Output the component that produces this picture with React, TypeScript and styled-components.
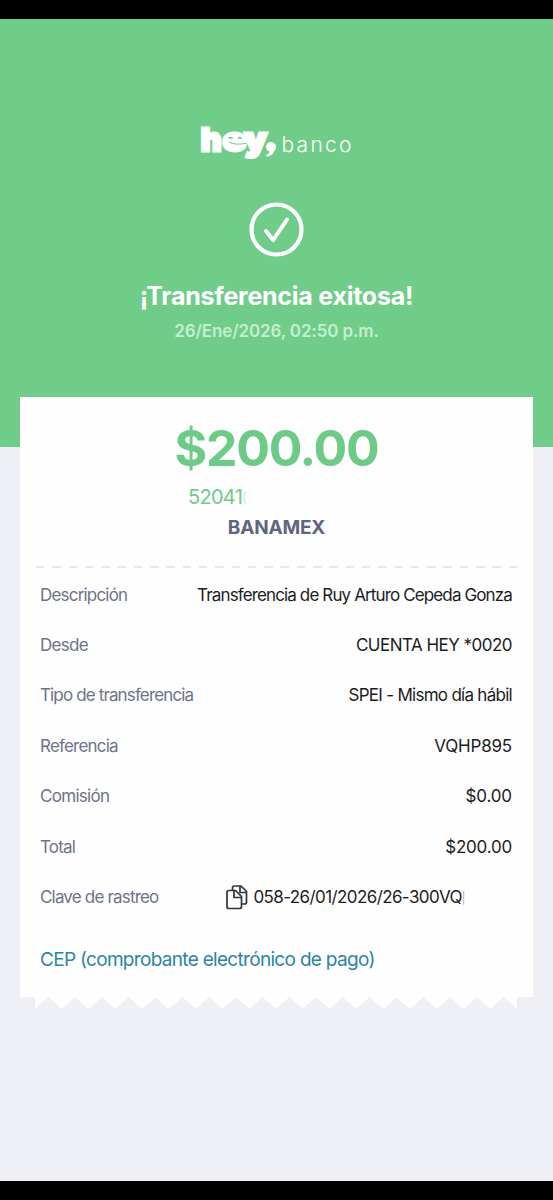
import React from "react";
import styled, { createGlobalStyle } from "styled-components";

const GlobalStyle = createGlobalStyle`
  * { box-sizing: border-box; }
  body { margin: 0; background: #000; font-family: Inter, "Liberation Sans", sans-serif; }
`;

const Screen = styled.div`
  height: 1200px;
  width: 553px;
  padding: 19px 0;
  background: #000;
  overflow: hidden;
`;

const Page = styled.main`
  height: 1162px;
  background: linear-gradient(#70cc89 0 428px, #eff0f6 428px);
  display: flex;
  flex-direction: column;
  align-items: center;
`;

const Header = styled.header`
  height: 378px;
  padding-top: 101px;
  display: flex;
  flex-direction: column;
  align-items: center;
  color: #fff;
`;

const Logo = styled.svg`
  display: block;
  width: 160px;
  height: 46px;
  overflow: visible;
`;

const CheckIcon = styled.svg`
  display: block;
  width: 57px;
  height: 57px;
  margin-top: 35px;
`;

const Line = styled.div<{ $size: number; $track?: number; $weight?: number }>`
  font-size: ${(p) => p.$size}px;
  font-weight: ${(p) => p.$weight ?? 400};
  letter-spacing: ${(p) => p.$track ?? 0}px;
  white-space: nowrap;
`;

const Title = styled(Line)`
  margin-top: 21px;
  line-height: 34px;
`;

const Timestamp = styled(Line)`
  margin-top: 7px;
  line-height: 22px;
  color: #c3f0cd;
`;

const Card = styled.section`
  width: 513px;
  height: 600px;
  background: #fefeff;
  display: flex;
  flex-direction: column;
`;

const Amount = styled(Line)`
  margin-top: 21px;
  line-height: 60px;
  text-align: center;
  color: #6dcb87;
`;

const Account = styled(Line)`
  display: flex;
  align-items: center;
  margin: 7px 0 0 168px;
  height: 24px;
  color: #6dcb87;
`;

const Remnant = styled.span<{ $size: number }>`
  font-size: ${(p) => p.$size}px;
  font-weight: 300;
  opacity: 0.45;
`;

const Bank = styled(Line)`
  margin-top: 7px;
  line-height: 24px;
  text-align: center;
  color: #5f6581;
`;

const Divider = styled.div`
  margin: 26px 15px 0 16px;
  height: 2px;
  background: repeating-linear-gradient(90deg, #e8e8ec 0 8.5px, transparent 8.5px 16.3px);
`;

const Rows = styled.dl`
  margin: 1.5px 0 0;
  padding: 0 21px 0 20px;
`;

const Row = styled.div`
  height: 50.4px;
  display: flex;
  align-items: center;
  justify-content: space-between;
`;

const Label = styled(Line).attrs({ as: "dt" })`
  color: #6d7389;
`;

const Value = styled(Line).attrs({ as: "dd" })`
  margin: 0;
  color: #1c1c1e;
`;

const Tracking = styled.dd`
  margin: 0 47px 0 0;
  display: flex;
  align-items: center;
  gap: 5px;
  color: #1c1c1e;
`;

const CopyIcon = styled.svg`
  width: 22px;
  height: 25px;
`;

const TrackingCode = styled(Line)`
  display: flex;
  align-items: center;
`;

const CepLink = styled(Line)`
  margin: 23.5px 0 0 20px;
  line-height: 28px;
  color: #2b85a3;
`;

const TornEdge = styled.svg`
  display: block;
  width: 482px;
  height: 13px;
  margin-right: 1px;
`;

const rows: [string, number, string, number][] = [
  ["Descripción", -0.8, "Transferencia de Ruy Arturo Cepeda Gonza", -0.87],
  ["Desde", -0.7, "CUENTA HEY *0020", -0.52],
  ["Tipo de transferencia", -0.86, "SPEI - Mismo día hábil", -0.72],
  ["Referencia", -0.8, "VQHP895", -0.2],
  ["Comisión", -0.7, "$0.00", -0.1],
  ["Total", -0.85, "$200.00", -0.2],
];

const TEETH = 18;
const STEP = 482 / TEETH;
const edge =
  "M0 0V12" +
  Array.from({ length: TEETH }, (_, i) => `L${(i + 0.5) * STEP} 0L${(i + 1) * STEP} 12`).join("") +
  "V0Z";

export default function App() {
  return (
    <>
      <GlobalStyle />
      <Screen>
        <Page>
          <Header>
            <Logo viewBox="196 120 160 46" fill="#fff">
              <g fontFamily="Inter" fontSize="32" fontWeight="900" stroke="#fff" strokeWidth="2.8">
                <text x="200.800" y="151">h</text>
                <text x="222.500" y="151" textLength="23.500" lengthAdjust="spacingAndGlyphs">e</text>
                <text x="244.500" y="151" textLength="22.500" lengthAdjust="spacingAndGlyphs">y</text>
              </g>
              <circle cx="271" cy="147" r="5" />
              <text x="266.500" y="150.500" fontSize="34" fontWeight="700" stroke="#fff" strokeWidth="0.800" fontFamily="Liberation Serif">,</text>
              <ellipse cx="235" cy="141" rx="9.500" ry="8.500" />
              <g fill="none" stroke="#70cc89" strokeLinecap="round">
                <path d="M229.500 138.200Q230.700 137.200 232 138.200M238.500 138.200Q239.700 137.200 241 138.200" strokeWidth="1.7" />
                <path d="M229.500 142.300Q235 145.500 246 143.300" strokeWidth="1" />
              </g>
              <text x="281.500" y="152" fontSize="21" fontWeight="300" textLength="70" fontFamily="Inter">banco</text>
            </Logo>
            <CheckIcon viewBox="0 0 57 57" fill="none" stroke="#fff" strokeLinecap="round" strokeLinejoin="round">
              <circle cx="28.500" cy="28.500" r="25" strokeWidth="4.2" />
              <path d="M18 30L25.200 39L39 18.500" strokeWidth="4" />
            </CheckIcon>
            <Title $size={25} $weight={700} $track={-0.25}>¡Transferencia exitosa!</Title>
            <Timestamp $size={17} $weight={600} $track={-0.13}>26/Ene/2026, 02:50 p.m.</Timestamp>
          </Header>
          <Card>
            <Amount $size={50} $weight={700} $track={-1.3}>$200.00</Amount>
            <Account $size={20} $track={-0.7}>52041<Remnant $size={13}>(</Remnant></Account>
            <Bank $size={19} $weight={700} $track={-0.2}>BANAMEX</Bank>
            <Divider />
            <Rows>
              {rows.map(([label, lt, value, vt]) => (
                <Row key={label}>
                  <Label $size={17} $track={lt}>{label}</Label>
                  <Value $size={17} $track={vt}>{value}</Value>
                </Row>
              ))}
              <Row>
                <Label $size={17} $track={-0.82}>Clave de rastreo</Label>
                <Tracking>
                  <CopyIcon viewBox="0 0 22 25" fill="none" stroke="#333" strokeWidth="1.7" strokeLinejoin="round">
                    <path d="M3 5.500H9.500L15.500 11.500V21.500Q15.500 23.500 13.500 23.500H3Q1 23.500 1 21.500V7.500Q1 5.500 3 5.500Z" />
                    <path d="M8 5.500V12.500H15.500" />
                    <path d="M6.500 5.500V3Q6.500 1 8.500 1H15L20.500 6.500V17Q20.500 19 18.500 19H15.500M14 1V7.500H20.500" />
                  </CopyIcon>
                  <TrackingCode $size={17} $track={-0.6}>058-26/01/2026/26-300VQ<Remnant $size={12}>|</Remnant></TrackingCode>
                </Tracking>
              </Row>
            </Rows>
            <CepLink $size={19} $track={-0.69}>CEP (comprobante electrónico de pago)</CepLink>
          </Card>
          <TornEdge viewBox="0 0 482 13">
            <path d={edge} fill="#fefeff" />
          </TornEdge>
        </Page>
      </Screen>
    </>
  );
}
